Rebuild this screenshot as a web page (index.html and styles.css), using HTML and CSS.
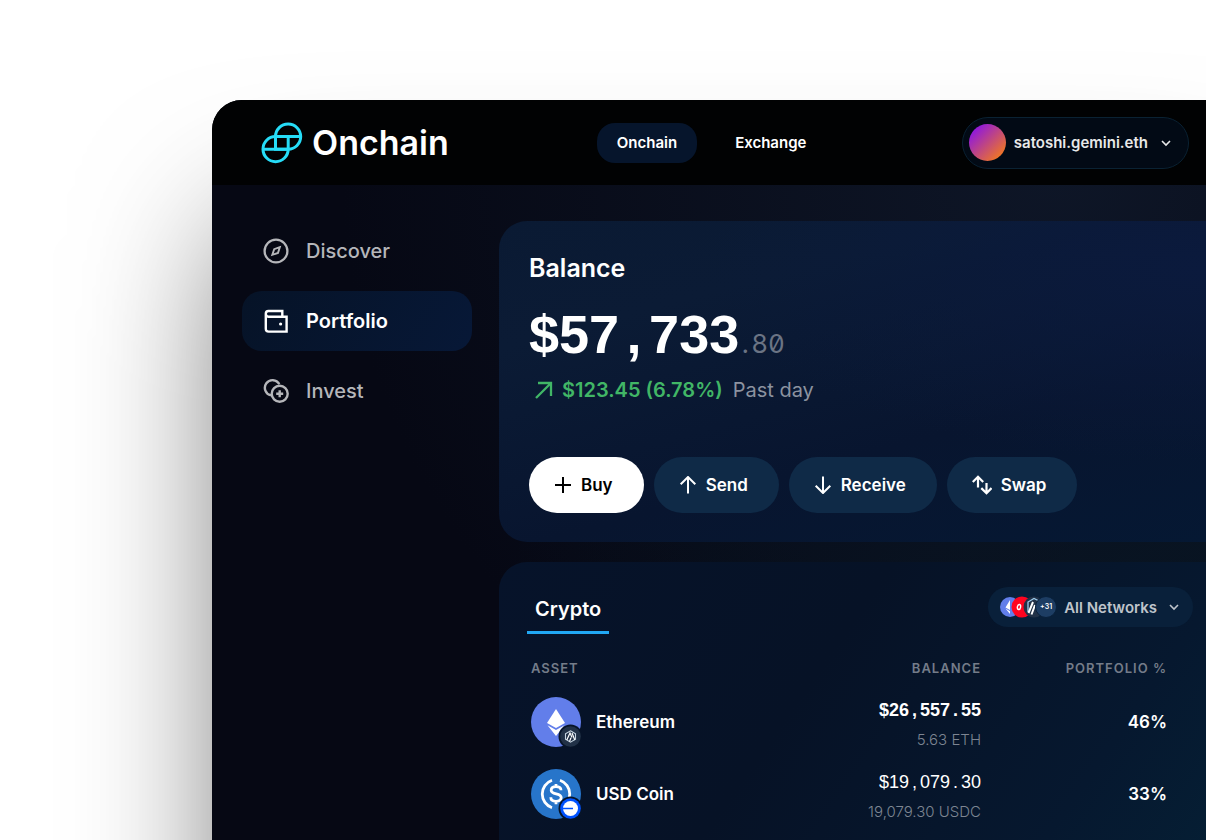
FILE: index.html
```html
<!DOCTYPE html>
<html lang="en">
  <head>
    <meta charset="UTF-8" />
    <meta name="viewport" content="width=device-width, initial-scale=1.0" />
    <title>Onchain - Portfolio</title>
    <link rel="stylesheet" href="styles.css">
  </head>
  <body>
    <div class="window">
      <header class="header">
        <a class="logo" href="#">
          <svg width="42" height="42" viewBox="0 0 42 42" fill="none" stroke="#26dcf7" stroke-width="3">
            <path d="M14.5 14.5A12.6 12.6 0 1 1 27.2 27.2H14.5Z" />
            <path d="M27.2 14.5H14.5A12.6 12.6 0 1 0 27.2 27.2Z" />
            <path d="M14.5 14.5H39.5M2.2 27.2H27.2" />
          </svg>
          <span>Onchain</span>
        </a>
        <nav class="tabs">
          <a class="tab active" href="#">Onchain</a>
          <a class="tab" href="#">Exchange</a>
        </nav>
        <button class="account" type="button">
          <span class="avatar"></span>
          <span>satoshi.gemini.eth</span>
          <svg class="chevron" width="12" height="12" viewBox="0 0 12 12" fill="none" stroke="currentColor" stroke-width="1.6">
            <path d="M2 4L6 8L10 4" />
          </svg>
        </button>
      </header>

      <div class="content">
        <nav class="sidebar">
          <a class="side-link" href="#">
            <svg width="26" height="26" viewBox="0 0 26 26" fill="none" stroke="currentColor" stroke-width="2.3">
              <circle cx="13" cy="13" r="11.4" />
              <path d="M16.8 9.2L11.2 11.2L9.3 16.8L15 14.9Z" stroke-width="1.9" />
            </svg>
            Discover
          </a>
          <a class="side-link active" href="#">
            <svg width="26" height="26" viewBox="0 0 26 26" fill="none" stroke="currentColor" stroke-width="2.4">
              <path d="M19.3 8.7V3H5.4Q2.8 3 2.8 5.8Q2.8 8.7 5.4 8.7H23.6V23.6H5.7Q2.8 23.6 2.8 20.7V5.8" />
              <circle cx="17.6" cy="16" r="1.6" fill="currentColor" stroke="none" />
            </svg>
            Portfolio
          </a>
          <a class="side-link" href="#">
            <svg width="26" height="26" viewBox="0 0 26 26" fill="none" stroke="currentColor" stroke-width="2.4">
              <path d="M16.3 6.1A7.7 7.7 0 1 0 8 17.4" />
              <circle cx="16.7" cy="15.7" r="8" />
              <path d="M16.7 12.2V19.2M13.2 15.7H20.2" />
            </svg>
            Invest
          </a>
        </nav>

        <main class="main">
          <section class="card balance-card">
            <h1>Balance</h1>
            <div class="amount">
              <span class="digits">$57<span class="cell">,</span>733</span><span class="cents"><span class="cell">.</span>80</span>
            </div>
            <div class="change">
              <svg width="20" height="20" viewBox="0 0 20 20" fill="none" stroke="currentColor" stroke-width="2.3">
                <path d="M2 18L17 3M4 3H17V16" />
              </svg>
              <strong>$123.45 (6.78%)</strong>
              <span>Past day</span>
            </div>
            <div class="actions">
              <button class="action primary" type="button">
                <svg width="18" height="18" viewBox="0 0 18 18" fill="none" stroke="currentColor" stroke-width="2">
                  <path d="M9 1V17M1 9H17" />
                </svg>
                Buy
              </button>
              <button class="action" type="button">
                <svg width="18" height="18" viewBox="0 0 18 18" fill="none" stroke="currentColor" stroke-width="2">
                  <path d="M9 17.5V1M1.7 8.3L9 1L16.3 8.3" />
                </svg>
                Send
              </button>
              <button class="action" type="button">
                <svg width="18" height="18" viewBox="0 0 18 18" fill="none" stroke="currentColor" stroke-width="2">
                  <path d="M9 .5V17M1.7 9.7L9 17L16.3 9.7" />
                </svg>
                Receive
              </button>
              <button class="action" type="button">
                <svg width="20" height="20" viewBox="0 0 20 20" fill="none" stroke="currentColor" stroke-width="2.2">
                  <path d="M6 12.5V2M.8 7L6 1.8L11.2 7M14.5 8V18.2M9.3 13.1L14.5 18.3L19.5 13.1" />
                </svg>
                Swap
              </button>
            </div>
          </section>

          <section class="card assets-card">
            <div class="assets-top">
              <button class="asset-tab" type="button">Crypto</button>
              <button class="networks" type="button">
                <span class="network-icons">
                  <svg width="22" height="22" viewBox="0 0 22 22">
                    <circle cx="11" cy="11" r="10" fill="#627eea" />
                    <path d="M11 4L6.5 11.4L11 14ZM6.5 12.6L11 18V15.2Z" fill="#fff" />
                  </svg>
                  <svg width="22" height="22" viewBox="0 0 22 22">
                    <circle cx="11" cy="11" r="10.5" fill="#ff0420" />
                    <ellipse cx="8" cy="11" rx="1.6" ry="2.5" fill="none" stroke="#fff" stroke-width="1.4" transform="rotate(12 8 11)" />
                  </svg>
                  <svg width="22" height="22" viewBox="0 0 22 22" fill="none">
                    <circle cx="11" cy="11" r="10.5" fill="#213147" />
                    <path d="M5 16V6L11 2.5L16 5" stroke="#9dcced" stroke-width="1.3" />
                    <path d="M5.5 17L10 6M8.5 18.5L12 9" stroke="#fff" stroke-width="2" />
                  </svg>
                  <span class="more">+31</span>
                </span>
                <span>All Networks</span>
                <svg class="chevron" width="12" height="12" viewBox="0 0 12 12" fill="none" stroke="currentColor" stroke-width="1.6">
                  <path d="M2 4L6 8L10 4" />
                </svg>
              </button>
            </div>

            <table class="assets">
              <thead>
                <tr>
                  <th>Asset</th>
                  <th>Balance</th>
                  <th>Portfolio %</th>
                </tr>
              </thead>
              <tbody>
                <tr>
                  <td>
                    <div class="asset">
                      <svg width="50" height="50" viewBox="0 0 50 50" fill="none">
                        <circle cx="25" cy="25" r="25" fill="#627eea" />
                        <path d="M25 12L34 26L25 31L16 26Z" fill="#fff" />
                        <path d="M16.5 28.2L25 33L33.5 28.2L25 39Z" fill="#fff" />
                        <circle cx="39.5" cy="39.5" r="12" fill="#071428" />
                        <circle cx="39.5" cy="39.5" r="10.3" fill="#213147" />
                        <path d="M39.5 33.8L44.5 36.7V42.3L39.5 45.2L34.5 42.3V36.7Z" stroke="#c5d3e0" stroke-width="1.1" />
                        <path d="M35.8 43L39 36L41 40.5M38.5 44.5L40 40.8M41 36L43.8 43" stroke="#fff" stroke-width="1.2" />
                      </svg>
                      Ethereum
                    </div>
                  </td>
                  <td class="holding">
                    <div class="value bold">$26<span class="cell">,</span>557<span class="cell">.</span>55</div>
                    <div class="units">5.63 ETH</div>
                  </td>
                  <td class="percent">46%</td>
                </tr>
                <tr>
                  <td>
                    <div class="asset">
                      <svg width="50" height="50" viewBox="0 0 50 50" fill="none">
                        <circle cx="25" cy="25" r="25" fill="#2775ca" />
                        <path d="M21 11.3A14.5 14.5 0 0 0 21 38.7M29 11.3A14.5 14.5 0 0 1 29 38.7" stroke="#fff" stroke-width="2.8" />
                        <path d="M30 21.3C30 18.8 27.8 17.7 25 17.7C22 17.7 20.2 19.1 20.2 21.2C20.2 26.2 30.2 23.6 30.2 28.6C30.2 30.9 28 32.3 25 32.3C21.8 32.3 19.8 30.9 19.8 28.3M25 15V18M25 32V35.2" stroke="#fff" stroke-width="2.8" />
                        <circle cx="39.5" cy="39.5" r="12" fill="#071428" />
                        <circle cx="39.5" cy="39.5" r="10.3" fill="#0052ff" />
                        <circle cx="39.5" cy="39.5" r="7.5" fill="#fff" />
                        <path d="M31 39.5H42" stroke="#0052ff" stroke-width="1.5" />
                      </svg>
                      USD Coin
                    </div>
                  </td>
                  <td class="holding">
                    <div class="value">$19<span class="cell">,</span>079<span class="cell">.</span>30</div>
                    <div class="units">19,079.30 USDC</div>
                  </td>
                  <td class="percent">33%</td>
                </tr>
              </tbody>
            </table>
          </section>
        </main>
      </div>
    </div>
  </body>
</html>
```

FILE: styles.css
```css
* {
  box-sizing: border-box;
}

html {
  overflow: hidden;
}

body {
  height: 100vh;
  margin: 0;
  padding: 100px 0 0 212px;
  overflow: hidden;
  background: #fff;
  color: #fff;
  font-family: Inter, "Liberation Sans", sans-serif;
}

a {
  color: inherit;
  text-decoration: none;
}

button {
  border: 0;
  padding: 0;
  background: none;
  color: inherit;
  font: inherit;
  cursor: pointer;
}

svg {
  display: block;
  flex-shrink: 0;
}

.window {
  min-height: 100vh;
  border-top-left-radius: 30px;
  overflow: hidden;
  background:
    radial-gradient(ellipse at 85% 8%, #0e1627 0%, rgba(14, 22, 39, 0) 60%),
    radial-gradient(ellipse at 100% 60%, #041420 0%, rgba(4, 20, 32, 0) 50%),
    #060814;
  box-shadow: 20px 130px 150px rgba(0, 0, 0, 0.6);
}

/* Header */
.header {
  display: flex;
  align-items: center;
  height: 85px;
  padding: 0 17px 0 49px;
  background: #010203;
}

.logo {
  display: flex;
  align-items: center;
  gap: 9px;
  font-size: 34px;
  font-weight: 600;
}

.tabs {
  display: flex;
  gap: 18px;
  margin-left: 148px;
}

.tab {
  padding: 0 20px;
  border-radius: 18px;
  font-size: 15px;
  font-weight: 600;
  line-height: 40px;
}

.tab.active {
  background: #06152c;
}

.account {
  display: flex;
  align-items: center;
  gap: 8px;
  height: 52px;
  margin-left: auto;
  padding: 0 16px 0 6px;
  border: 1px solid #0a2233;
  border-radius: 26px;
  background: #020a15;
  color: #e8e8e8;
  font-size: 15px;
  font-weight: 600;
}

.avatar {
  width: 37px;
  height: 37px;
  border-radius: 50%;
  background: linear-gradient(135deg, #8a13e8 10%, #f47a1c 90%);
}

.chevron {
  margin-left: 4px;
}

/* Sidebar */
.content {
  display: flex;
  gap: 27px;
  padding: 36px 0 0 30px;
}

.sidebar {
  display: flex;
  flex: 0 0 230px;
  flex-direction: column;
  gap: 10px;
}

.side-link {
  display: flex;
  align-items: center;
  gap: 17px;
  height: 60px;
  padding-left: 21px;
  border-radius: 20px;
  color: #b5b6ba;
  font-size: 20px;
  font-weight: 500;
}

.side-link.active {
  background: linear-gradient(120deg, #061327, #071837);
  color: #fff;
  font-weight: 600;
}

/* Cards */
.main {
  flex: 1;
  min-width: 0;
}

.card {
  border-radius: 28px 0 0 28px;
}

.balance-card {
  margin-bottom: 20px;
  padding: 30px 30px 29px;
  background:
    radial-gradient(ellipse at 100% 15%, #0b1a3d 0%, rgba(11, 26, 61, 0) 50%),
    linear-gradient(165deg, #0a1a33 0%, #0b1b35 25%, #08152f 65%, #051833 100%);
}

h1 {
  margin: 0;
  font-size: 25px;
  font-weight: 600;
  line-height: 34px;
}

.cell {
  display: inline-block;
  text-align: center;
}

.amount {
  margin-top: 19px;
  line-height: 60px;
}

.digits {
  font-family: "Liberation Sans", sans-serif;
  font-size: 54px;
  font-weight: 700;
}

.digits .cell {
  width: 30px;
}

.cents {
  color: #6b7484;
  font-size: 26px;
  font-variant-numeric: tabular-nums slashed-zero;
}

.cents .cell {
  width: 12px;
}

.change {
  display: flex;
  align-items: center;
  gap: 8px;
  padding-left: 5px;
  color: #41b666;
  font-size: 20px;
  line-height: 26px;
}

.change strong {
  font-weight: 600;
}

.change span {
  margin-left: 2px;
  color: #8c93a0;
}

.actions {
  display: flex;
  gap: 10px;
  margin-top: 54px;
}

.action {
  display: flex;
  align-items: center;
  gap: 9px;
  height: 56px;
  padding: 0 31px 0 25px;
  border-radius: 28px;
  background: #0f2a47;
  font-size: 17px;
  font-weight: 600;
}

.action.primary {
  background: #fff;
  color: #000;
}

.assets-card {
  min-height: 400px;
  padding: 25px 13px 0 28px;
  background: linear-gradient(125deg, #06132a 0%, #061226 40%, #06182f 75%, #052136 100%);
}

.assets-top {
  display: flex;
  align-items: flex-start;
  justify-content: space-between;
}

.asset-tab {
  padding: 0 8px;
  border-bottom: 3px solid #21a8f4;
  font-size: 20px;
  font-weight: 600;
  line-height: 44px;
}

.networks {
  display: flex;
  align-items: center;
  gap: 7px;
  height: 40px;
  padding: 0 13px 0 11px;
  border-radius: 20px;
  background: #09203a;
  color: #bfc4cb;
  font-size: 15px;
  font-weight: 600;
}

.network-icons {
  display: flex;
}

.network-icons > * + * {
  margin-left: -10px;
}

.more {
  width: 22px;
  height: 22px;
  border: 1px solid #09203a;
  border-radius: 50%;
  background: #1d3d63;
  color: #fff;
  font-size: 7px;
  line-height: 20px;
}

.assets {
  width: calc(100% - 30px);
  margin: 16px 26px 0 4px;
  border-collapse: collapse;
}

.assets th {
  padding: 0;
  color: #747c89;
  font-size: 13px;
  font-weight: 600;
  letter-spacing: 1px;
  line-height: 36px;
  text-align: right;
  text-transform: uppercase;
}

.assets th:last-child {
  width: 186px;
}

.assets td {
  height: 72px;
  padding: 0;
  text-align: right;
}

.assets th:first-child,
.assets td:first-child {
  text-align: left;
}

.asset {
  display: flex;
  align-items: center;
  gap: 15px;
  font-size: 17px;
  font-weight: 600;
}

.assets .holding {
  padding-top: 6px;
}

.value {
  font-family: "Liberation Sans", sans-serif;
  font-size: 18px;
  line-height: 30px;
}

.value.bold {
  font-weight: 700;
}

.value .cell {
  width: 11px;
}

.units {
  color: #7d8592;
  font-size: 15px;
  font-weight: 300;
  line-height: 30px;
}

.assets .percent {
  font-size: 17px;
  font-weight: 600;
}
```
